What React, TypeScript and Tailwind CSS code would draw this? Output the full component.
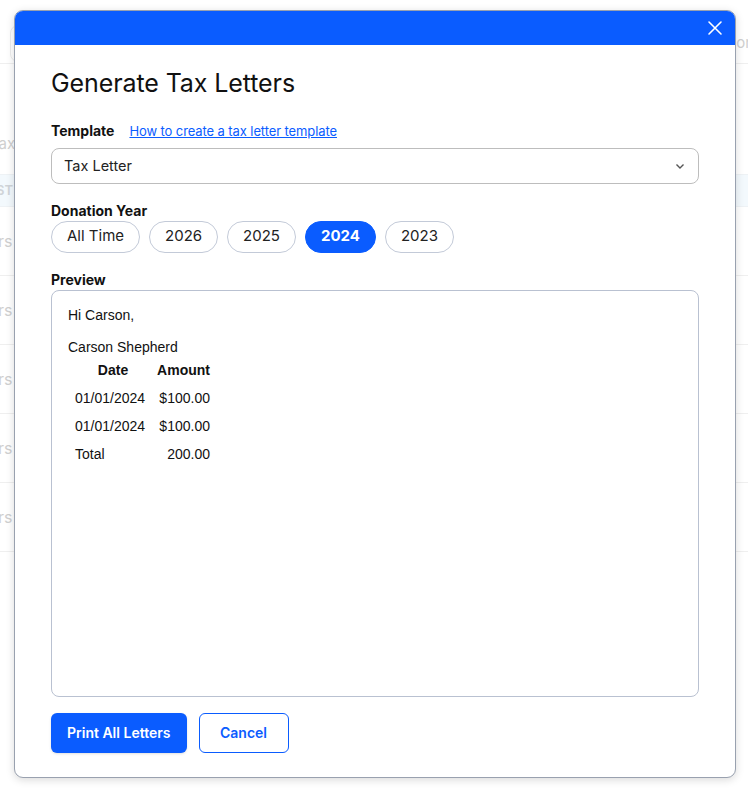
import React from "react";

const years = ["All Time", "2026", "2025", "2024", "2023"];

function Background() {
  const rows = [0, 1, 2, 3, 4];
  return (
    <div className="absolute inset-0 overflow-hidden text-[#cfcfcf]" style={{ fontFamily: "Inter, sans-serif" }}>
      <div className="absolute left-[10px] top-[25px] w-[60px] h-[37px] border border-[#ececec] rounded-[8px]" />
      <div className="mt-[23px] h-[41px] border-b border-[#efefef] flex items-center justify-end text-[15px]">
        <span className="mr-[-6px]">on</span>
      </div>
      <div className="h-[110px] flex items-center text-[15px]">
        <span className="ml-[-10px] mt-[50px]">Tax</span>
      </div>
      <div className="h-[33px] bg-[#f3f9fd] border-y border-[#eef2f5] flex items-center text-[13px] font-semibold text-[#d0d4d8]">
        <span className="ml-[-4px]">ST</span>
      </div>
      {rows.map((r) => (
        <div key={r} className="h-[69px] border-b border-[#efefef] flex items-center text-[16px]">
          <span className="ml-[-2px]">rs</span>
        </div>
      ))}
    </div>
  );
}

export default function App() {
  return (
    <div className="relative w-[748px] h-[788px] bg-white overflow-hidden">
      <Background />
      <div
        className="absolute left-[14px] top-[10px] w-[722px] h-[768px] bg-white border border-gray-400 rounded-[9px] shadow-[0_2px_8px_rgba(0,0,0,0.15)] overflow-hidden flex flex-col"
        style={{ fontFamily: "Inter, 'Liberation Sans', sans-serif" }}
      >
        <div className="h-[34px] bg-[#0a5cff] flex items-center justify-end pr-[12px] shrink-0">
          <svg width="16" height="16" viewBox="0 0 16 16" fill="none" stroke="white" strokeWidth="1.6" strokeLinecap="round">
            <path d="M2 2 L14 14 M14 2 L2 14" />
          </svg>
        </div>
        <div className="flex-1 flex flex-col px-[36px] pt-[22px] pb-[24px]">
          <h1 className="text-[25px] leading-[32px] text-[#111] font-normal tracking-[-0.1px]">Generate Tax Letters</h1>
          <div className="mt-[21px] flex items-baseline gap-[15px]">
            <span className="text-[14px] font-bold text-[#111]">Template</span>
            <a className="text-[13px] text-[#0a5cff] underline tracking-[-0.1px]">How to create a tax letter template</a>
          </div>
          <div className="mt-[6px] h-[36px] border border-[#bdbdbd] rounded-[8px] flex items-center justify-between pl-[12px] pr-[12px]">
            <span className="text-[14.5px] text-[#222]">Tax Letter</span>
            <svg width="12" height="12" viewBox="0 0 12 12" fill="none" stroke="#555" strokeWidth="1.4">
              <path d="M2.5 4.5 L6 8 L9.5 4.5" />
            </svg>
          </div>
          <div className="mt-[18px] text-[14px] font-bold text-[#111] leading-[18px]">Donation Year</div>
          <div className="mt-[1px] flex gap-[9px]">
            {years.map((y) => (
              <div
                key={y}
                className={
                  y === "2024"
                    ? "h-[32px] px-[15px] rounded-full bg-[#0a5cff] text-white font-bold text-[15px] flex items-center border border-[#0a5cff]"
                    : "h-[32px] px-[15px] rounded-full border border-[#c3cad8] text-[#222] text-[15px] flex items-center"
                }
              >
                {y}
              </div>
            ))}
          </div>
          <div className="mt-[18px] text-[14px] font-bold text-[#111] leading-[18px]">Preview</div>
          <div
            className="mt-[1px] h-[407px] border border-[#b9c1d1] rounded-[8px] px-[16px] pt-[16px] text-[14px] text-[#111]"
            style={{ fontFamily: "'Liberation Sans', Arial, sans-serif" }}
          >
            <p className="leading-[16px]">Hi Carson,</p>
            <p className="mt-[16px] leading-[16px]">Carson Shepherd</p>
            <table className="mt-[0px] ml-[3px] border-separate border-spacing-[2px] leading-[16px]">
              <thead>
                <tr>
                  <th className="px-[2px] py-[5px] font-bold text-center">Date</th>
                  <th className="px-[2px] py-[5px] font-bold text-center">Amount</th>
                </tr>
              </thead>
              <tbody>
                {["01/01/2024", "01/01/2024"].map((d, i) => (
                  <tr key={i}>
                    <td className="px-[2px] py-[5px] pr-[8px]">{d}</td>
                    <td className="px-[2px] py-[5px] text-right">$100.00</td>
                  </tr>
                ))}
                <tr>
                  <td className="px-[2px] py-[5px]">Total</td>
                  <td className="px-[2px] py-[5px] text-right">200.00</td>
                </tr>
              </tbody>
            </table>
          </div>
          <div className="mt-[16px] flex gap-[12px]">
            <button className="h-[40px] px-[16px] rounded-[6px] bg-[#0a5cff] text-white text-[14px] font-semibold shadow-sm">
              Print All Letters
            </button>
            <button className="h-[40px] w-[90px] rounded-[6px] border border-[#0a5cff] text-[#0a5cff] text-[14px] font-semibold bg-white">
              Cancel
            </button>
          </div>
        </div>
      </div>
    </div>
  );
}
